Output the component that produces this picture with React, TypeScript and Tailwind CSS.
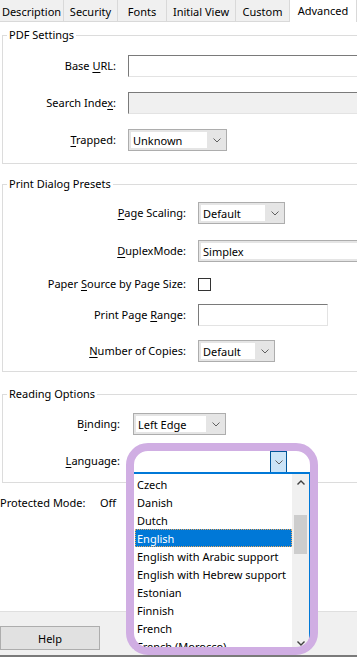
import type { ReactNode } from "react";

const TABS = [
  { label: "Description", w: "w-[64px]" },
  { label: "Security", w: "w-[54px]" },
  { label: "Fonts", w: "w-[49px]" },
  { label: "Initial View", w: "w-[69px]" },
  { label: "Custom", w: "w-[54px]" },
];

const LANGS = [
  "Czech",
  "Danish",
  "Dutch",
  "English",
  "English with Arabic support",
  "English with Hebrew support",
  "Estonian",
  "Finnish",
  "French",
  "French (Morocco)",
];

function Chevron({ up = false }: { up?: boolean }) {
  return (
    <svg width="8" height="5" viewBox="0 0 8 5" aria-hidden="true">
      <polyline
        points={up ? "0.5,4.5 4,1 7.5,4.5" : "0.5,0.5 4,4 7.5,0.5"}
        fill="none"
        stroke={up ? "#404040" : "#606060"}
        strokeWidth={up ? 1.4 : 1}
      />
    </svg>
  );
}

function Combo({ value, className }: { value: string; className: string }) {
  return (
    <div className={`flex h-[22px] border border-[#adadad] bg-[#e5e5e5] py-[2px] pl-[2px] ${className}`}>
      <div className="flex flex-1 items-center bg-white pl-[2px] leading-none whitespace-nowrap">{value}</div>
      <div className="flex w-[19px] items-center justify-center">
        <Chevron />
      </div>
    </div>
  );
}

function Field({ className = "", disabled = false }: { className?: string; disabled?: boolean }) {
  return (
    <div
      className={`h-[22px] border border-t-[#7a7a7a] border-l-[#7a7a7a] border-r-[#e3e3e3] border-b-[#e3e3e3] ${
        disabled ? "bg-[#f0f0f0]" : "bg-white"
      } ${className}`}
    />
  );
}

function Row({ label, lw, children, className = "" }: { label: ReactNode; lw: string; children: ReactNode; className?: string }) {
  return (
    <div className={`flex h-[22px] items-center ${className}`}>
      <div className={`${lw} shrink-0 text-right whitespace-nowrap`}>{label}</div>
      {children}
    </div>
  );
}

function Group({ title, children, className = "" }: { title: string; children: ReactNode; className?: string }) {
  return (
    <fieldset className={`ml-[2px] w-[400px] border border-[#dcdcdc] ${className}`}>
      <legend className="ml-[4px] px-[2px] leading-4">{title}</legend>
      {children}
    </fieldset>
  );
}

const U = ({ children }: { children: ReactNode }) => (
  <span className="underline decoration-1 underline-offset-[2px]">{children}</span>
);

export default function App() {
  return (
    <div className="relative flex h-[657px] w-[357px] flex-col overflow-hidden bg-white font-['Noto_Sans',sans-serif] text-[11px] text-black">
      {/* tab strip */}
      <div className="flex h-[22px] shrink-0">
        {TABS.map((t) => (
          <div
            key={t.label}
            className={`${t.w} flex h-[22px] items-center justify-center border-r border-b border-[#d9d9d9] bg-[#f0f0f0] pt-[2px] leading-none`}
          >
            {t.label}
          </div>
        ))}
        <div className="flex h-[22px] w-[67px] items-center justify-center border-r border-[#d9d9d9] bg-white pb-[2px] leading-none">
          Advanced
        </div>
      </div>

      <div className="flex-1">
        <Group title="PDF Settings" className="mt-[5px] pb-[12px]">
          <Row label={<>Base <U>U</U>RL:</>} lw="w-[113px]" className="mt-[12px]">
            <Field className="ml-[12px] w-[260px]" />
          </Row>
          <Row label={<>Search Inde<U>x</U>:</>} lw="w-[113px]" className="mt-[15px]">
            <Field className="ml-[12px] w-[260px]" disabled />
          </Row>
          <Row label={<><U>T</U>rapped:</>} lw="w-[113px]" className="mt-[15px]">
            <Combo value="Unknown" className="ml-[12px] w-[99px]" />
          </Row>
        </Group>

        <Group title="Print Dialog Presets" className="mt-[12px] pb-[9px]">
          <Row label={<><U>P</U>age Scaling:</>} lw="w-[183px]" className="mt-[10px]">
            <Combo value="Default" className="ml-[12px] w-[87px]" />
          </Row>
          <Row label={<><U>D</U>uplexMode:</>} lw="w-[183px]" className="mt-[16px]">
            <Combo value="Simplex" className="ml-[12px] w-[180px]" />
          </Row>
          <Row label={<>Paper <U>S</U>ource by Page Size:</>} lw="w-[183px]" className="mt-[11px]">
            <div className="ml-[12px] h-[13px] w-[13px] border border-[#333333] bg-white" />
          </Row>
          <Row label={<>Print Page <U>R</U>ange:</>} lw="w-[183px]" className="mt-[9px]">
            <Field className="ml-[12px] w-[130px]" />
          </Row>
          <Row label={<><U>N</U>umber of Copies:</>} lw="w-[183px]" className="mt-[14px]">
            <Combo value="Default" className="ml-[12px] w-[77px]" />
          </Row>
        </Group>

        <Group title="Reading Options" className="mt-[14px] pb-[10px]">
          <Row label={<>B<U>i</U>nding:</>} lw="w-[117px]" className="mt-[11px]">
            <Combo value="Left Edge" className="ml-[13px] w-[93px]" />
          </Row>
          <Row label={<><U>L</U>anguage:</>} lw="w-[117px]" className="mt-[15px]">
            <div className="relative ml-[13px] h-[22px] w-[154px]">
              <div className="flex h-[22px] justify-end bg-white">
                <div className="mt-[1px] flex h-[22px] w-[17px] items-center justify-center border border-[#005499] bg-[#cce4f7]">
                  <Chevron />
                </div>
              </div>

              {/* open list */}
              <div className="absolute top-[22px] left-0 z-10 flex h-[178px] w-[177px] border-t-2 border-r border-[#0078d7] bg-white">
                <ul className="flex-1 overflow-hidden pt-[1px] pl-[2px]">
                  {LANGS.map((l) => (
                    <li
                      key={l}
                      className={`flex h-[18px] items-center pl-[2px] leading-none whitespace-nowrap ${
                        l === "English" ? "bg-[#0078d7] text-white outline-1 outline-dotted outline-offset-[-1px] outline-[#e9a860]" : ""
                      }`}
                    >
                      {l}
                    </li>
                  ))}
                </ul>
                <div className="flex w-[17px] flex-col items-center bg-[#f0f0f0]">
                  <div className="flex h-[18px] items-center justify-center">
                    <Chevron up />
                  </div>
                  <div className="mt-[23px] h-[40px] w-[13px] bg-[#cdcdcd]" />
                  <div className="mt-[82px] flex h-[14px] items-center justify-center">
                    <svg width="8" height="5" viewBox="0 0 8 5" aria-hidden="true">
                      <polyline points="0.5,0.5 4,4 7.5,0.5" fill="none" stroke="#404040" strokeWidth="1.4" />
                    </svg>
                  </div>
                </div>
              </div>

              {/* highlight ring */}
              <div className="pointer-events-none absolute top-[-7px] left-[-7px] z-20 h-[212px] w-[192px] rounded-[22px] border-8 border-[#d0aee3]" />
            </div>
          </Row>
        </Group>

        <div className="mt-[12px] flex h-4 items-center leading-4">
          <span className="w-[100px]">Protected Mode:</span>
          <span>Off</span>
        </div>
      </div>

      {/* bottom bar */}
      <div className="flex h-[46px] shrink-0 flex-col border-t border-[#dfdfdf] bg-[#f0f0f0]">
        <div className="mt-[14px] flex h-[24px] w-[100px] items-center justify-center border border-[#adadad] bg-[#e1e1e1] leading-none">
          Help
        </div>
        <div className="mt-auto h-[2px] bg-[#7a7a7a]" />
      </div>
    </div>
  );
}
